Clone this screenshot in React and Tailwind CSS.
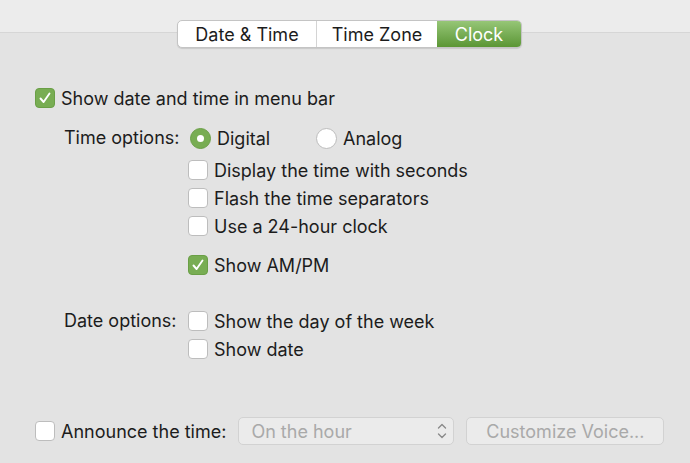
const font = { fontFamily: "Inter, 'Noto Sans', sans-serif" };

function Check({ checked }) {
  if (checked) {
    return (
      <span className="flex h-[20px] w-[20px] shrink-0 items-center justify-center rounded-[4px] border border-[#6a9f46] bg-[#78ad53]">
        <svg width="14" height="14" viewBox="0 0 14 14" fill="none">
          <path d="M2.5 7.5 L5.6 11 L11.5 2.5" stroke="white" strokeWidth="1.9" strokeLinecap="round" strokeLinejoin="round" />
        </svg>
      </span>
    );
  }
  return <span className="h-[20px] w-[20px] shrink-0 rounded-[4px] border border-[#bdbdbd] bg-white" />;
}

function Radio({ checked }) {
  if (checked) {
    return (
      <span className="flex h-[21px] w-[21px] shrink-0 items-center justify-center rounded-full bg-[#78ad53] border border-[#6a9f46]">
        <span className="h-[7px] w-[7px] rounded-full bg-white" />
      </span>
    );
  }
  return <span className="h-[21px] w-[21px] shrink-0 rounded-full border border-[#bdbdbd] bg-white" />;
}

function Row({ checked, children, className = "" }) {
  return (
    <div className={`flex h-[28px] items-center gap-[6px] ${className}`}>
      <Check checked={checked} />
      <span>{children}</span>
    </div>
  );
}

export default function App() {
  return (
    <div className="h-[463px] w-[690px] overflow-hidden bg-[#e3e3e3] text-[18px] text-[#1c1c1c]" style={font}>
      <div className="h-[33px] border-b border-[#d6d6d6] bg-[#ececec]" />
      <div className="-mt-[13px] flex justify-center pl-[9px]">
        <div className="flex h-[28px] overflow-hidden rounded-[5px] border border-[#c4c4c4] bg-white text-[18px] shadow-[0_1px_1px_rgba(0,0,0,0.12)]">
          <div className="flex w-[139px] items-center justify-center border-r border-[#d4d4d4]">Date &amp; Time</div>
          <div className="flex w-[120px] items-center justify-center">Time Zone</div>
          <div className="flex w-[84px] items-center justify-center bg-gradient-to-b from-[#96c676] to-[#5b9634] text-white">Clock</div>
        </div>
      </div>

      <div className="pl-[35px] pt-[36px]">
        <Row checked>Show date and time in menu bar</Row>

        <div className="mt-[12px] flex">
          <div className="w-[153px] pl-[29px] leading-[28px]">Time options:</div>
          <div className="flex flex-col">
            <div className="flex h-[28px] items-center">
              <div className="flex w-[128px] items-center gap-[6px] pl-[2px]">
                <Radio checked />
                <span>Digital</span>
              </div>
              <div className="flex items-center gap-[6px]">
                <Radio />
                <span>Analog</span>
              </div>
            </div>
            <Row className="mt-[4px]">Display the time with seconds</Row>
            <Row>Flash the time separators</Row>
            <Row>Use a 24-hour clock</Row>
            <Row checked className="mt-[11px]">Show AM/PM</Row>
          </div>
        </div>

        <div className="mt-[28px] flex">
          <div className="w-[153px] pl-[29px] leading-[28px]">Date options:</div>
          <div className="flex flex-col">
            <Row>Show the day of the week</Row>
            <Row>Show date</Row>
          </div>
        </div>

        <div className="mt-[54px] flex items-center">
          <div className="flex items-center gap-[6px]">
            <Check />
            <span>Announce the time:</span>
          </div>
          <div className="ml-[12px] flex h-[28px] w-[216px] items-center justify-between rounded-[5px] border border-[#d2d2d2] bg-[#ebebeb] pl-[12px] pr-[6px] text-[#a9a9a9]">
            <span>On the hour</span>
            <svg width="10" height="18" viewBox="0 0 10 18" fill="none">
              <path d="M1.5 6 L5 2.5 L8.5 6 M1.5 12 L5 15.5 L8.5 12" stroke="#8a8a8a" strokeWidth="1.4" strokeLinecap="round" strokeLinejoin="round" />
            </svg>
          </div>
          <div className="ml-[12px] flex h-[28px] w-[198px] items-center justify-center rounded-[5px] border border-[#d2d2d2] bg-[#ebebeb] text-[#a9a9a9]">
            Customize Voice...
          </div>
        </div>
      </div>
    </div>
  );
}
